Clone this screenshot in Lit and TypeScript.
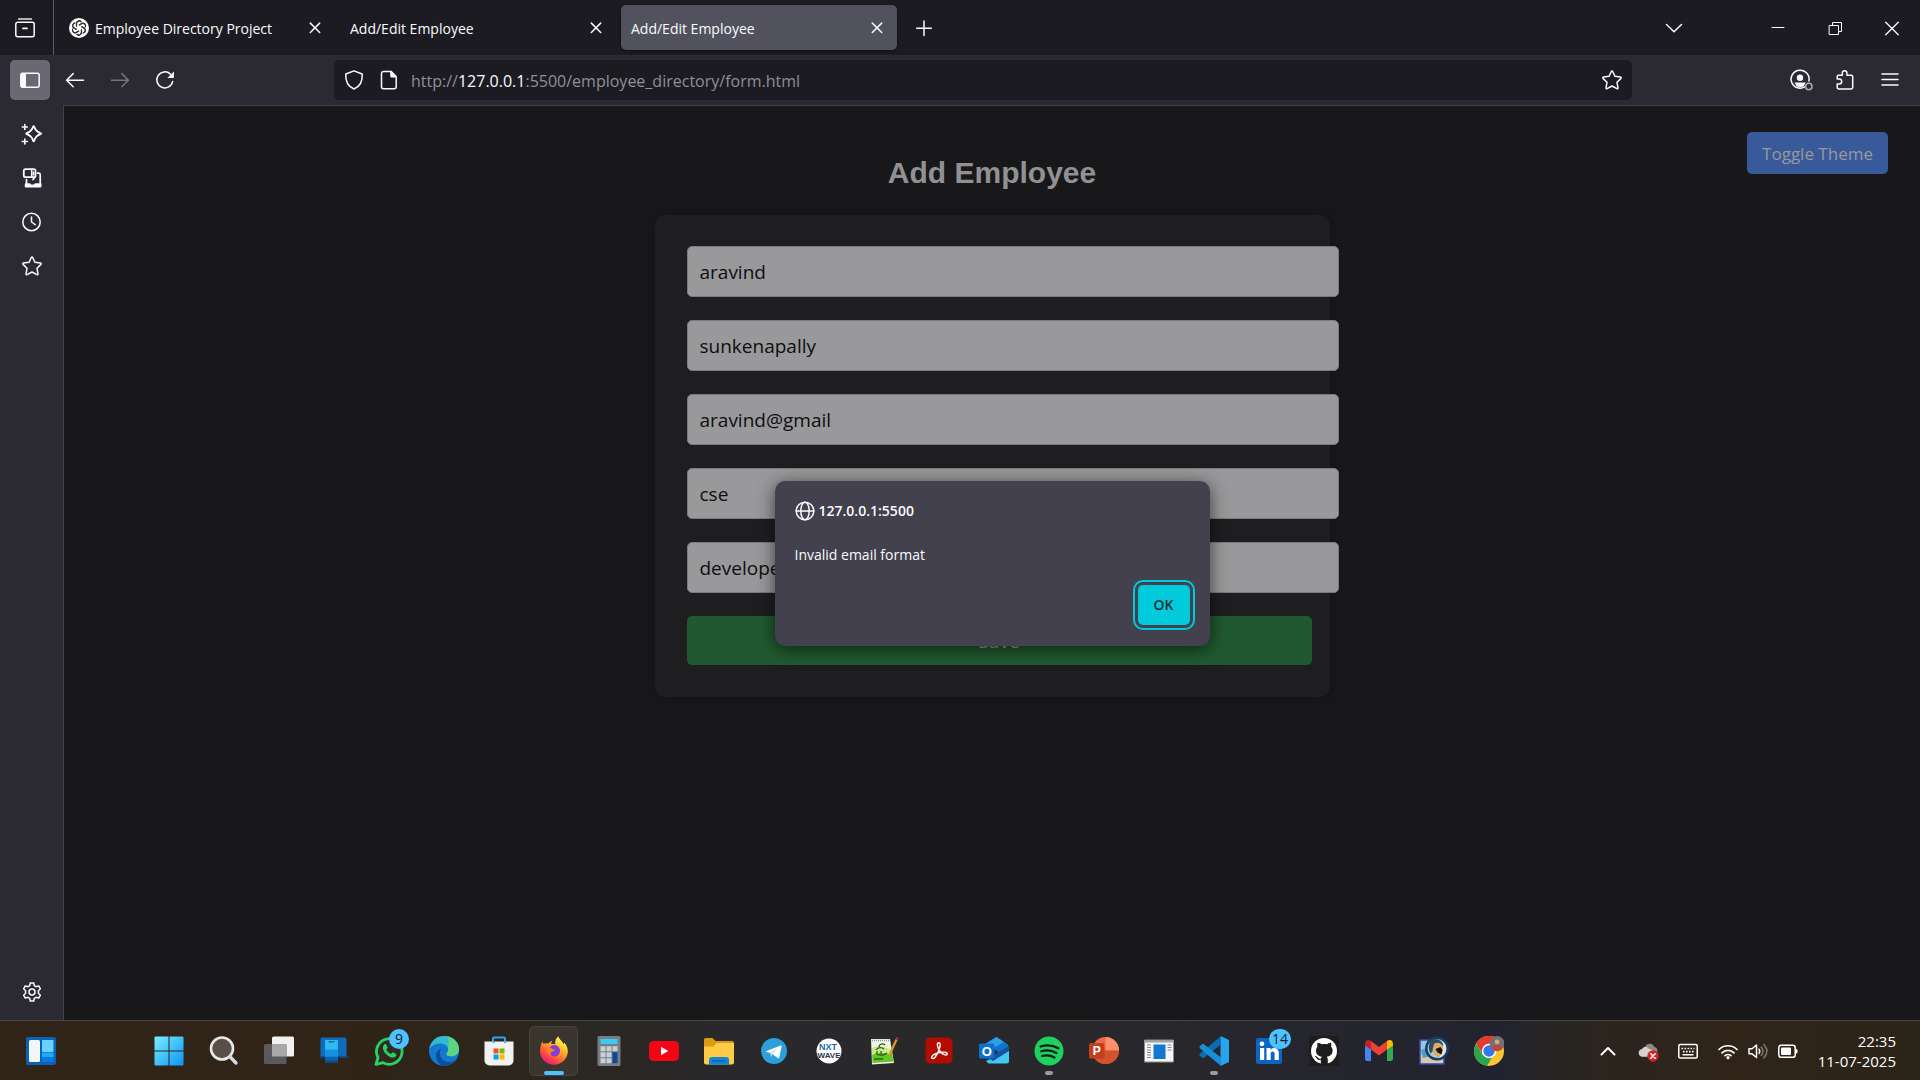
import { LitElement, html, svg, css, type TemplateResult } from "lit";
import { customElement, property } from "lit/decorators.js";

/* ---------- line icons, drawn on a 20 x 20 grid ---------- */
const line: Record<string, TemplateResult> = {
  view: svg`<path d="M3.5 1h13" stroke-width="1.4" opacity=".9"/><path d="M2.8 4.2h14.4a2 2 0 0 1 2 2v10.6a2 2 0 0 1-2 2H2.8a2 2 0 0 1-2-2V6.200a2 2 0 0 1 2-2z"/><path d="M8 10.400h4" stroke-width="1.800"/>`,
  sidebar: svg`<rect x=".8" y="3.300" width="18.400" height="13.900" rx="2"/><path d="M2 3h4v14H2a1 1 0 0 1-1-1V4z" fill="currentColor" stroke-width="0"/>`,
  back: svg`<path d="M18.500 10.200H1.800M8.200 3.600 1.600 10.200l6.600 6.600"/>`,
  forward: svg`<path d="M1.500 10.200h16.700M11.800 3.600l6.600 6.600-6.600 6.600"/>`,
  reload: svg`<path d="M17.700 11.400a8 8 0 1 1-2.300-7.300" /><path d="M19 1.400v5.800a.8.8 0 0 1-.8.800h-5.800z" fill="currentColor" stroke-width="0"/>`,
  shield: svg`<path d="M10 .9 18.200 4c.4 5.800-1.200 12-8.200 15C3 16 1.400 9.800 1.800 4z" stroke-linejoin="round"/>`,
  page: svg`<path d="M4.500 1.400H12l5.200 5.200v10.200a2 2 0 0 1-2 2H4.500a2 2 0 0 1-2-2V3.400a2 2 0 0 1 2-2z"/><path d="M11.200 1l6.500 6.500h-5a1.500 1.500 0 0 1-1.500-1.500z" fill="currentColor" stroke-width="0"/>`,
  star: svg`<path d="M9.300 1.500a.8.8 0 0 1 1.400 0l2.200 4.800 5.600.8c.7.100.9.800.5 1.300l-4 3.900 1 5.600c.1.700-.5 1.100-1.100.8L10 16l-4.900 2.700c-.6.300-1.200-.1-1.100-.8l1-5.600-4-3.900c-.4-.5-.2-1.200.5-1.300l5.600-.8z"/>`,
  chevron: svg`<path d="M2.500 6.500 10 13.800l7.500-7.300"/>`,
  close: svg`<path d="M5.300 5.100l9.400 9.400M14.700 5.100l-9.400 9.400"/>`,
  plus: svg`<path d="M10 3v14.500M2.700 10.200h14.600"/>`,
  account: svg`<path d="M14.700 16.900A9 9 0 1 1 18.900 11"/><circle cx="10" cy="7.800" r="3.200" fill="currentColor" stroke-width="0"/><path d="M4.500 12.500h11l-1 2.500-1 1.300c-2 1.800-6 1.200-7.500-1z" fill="currentColor" stroke-width="0"/><circle cx="18.800" cy="16.500" r="3.200" stroke="#aaaab0" stroke-width="1.500"/>`,
  puzzle: svg`<path d="M2.200 9V6.700a1.500 1.500 0 0 1 1.500-1.500h3.600V3.100a2.300 2.300 0 0 1 4.600 0v2.100h4.300a1.500 1.500 0 0 1 1.500 1.500v10.700a1.500 1.500 0 0 1-1.500 1.500H3.700a1.500 1.500 0 0 1-1.500-1.500V14h2a2.500 2.500 0 0 0 0-5z"/>`,
  menu: svg`<path d="M2 4h16M2 9.500h16M2 15h16"/>`,
  sparkle: svg`<path d="M11.200 2.600c.2-.5.700-.5.900 0 1 3.400 2.600 5.400 6.500 6.600.6.200.6.700 0 .9-3.900 1.200-5.500 3.200-6.500 6.900-.2.500-.7.500-.9 0-1-3.700-2.600-5.700-6.500-6.900-.6-.2-.6-.7 0-.9 3.900-1.200 5.500-3.200 6.500-6.600z" stroke-width="1.800"/><path d="M2.800.5v5M.3 3h5M2.800 15v5M.3 17.500h5" stroke-width="1.600"/>`,
  devices: svg`<rect x="1.800" y="1.200" width="11.700" height="8" rx="1.800" stroke-width="1.800"/><path d="M9.700 1.800v7M11.500 4v3" stroke-width="1.500"/><path d="M15.500 5.200h1.200a1.500 1.500 0 0 1 1.500 1.500v8.500M4.500 11.500v3.700M11 11.500l1.700-2" stroke-width="1.700"/><path d="M3 15.200h5l1 1.200h3l1-1.200h6.500v3a1.200 1.200 0 0 1-1.200 1.200H4a1.200 1.200 0 0 1-1.300-1.200z" fill="currentColor" stroke-width="0"/>`,
  clock: svg`<circle cx="9.500" cy="10" r="8.700"/><path d="M9.500 5v5l3.700 2.600"/>`,
  gear: svg`<path d="M8.300 1h3.400l.6 2.700 1.700 1 2.700-.8 1.700 2.900-2 1.900v2.600l2 1.900-1.700 2.900-2.700-.8-1.700 1-.6 2.700H8.300l-.6-2.700-1.700-1-2.700.8-1.700-2.900 2-1.900V8.700l-2-1.900 1.700-2.900 2.700.8 1.700-1z"/><circle cx="10" cy="10" r="3"/>`,
  minimize: svg`<path d="M4 9.500h12" stroke-width="1"/>`,
  restore: svg`<path d="M3.500 7.500h9v9h-9zM6.500 7.500v-3h9v9h-3" stroke-width="1"/>`,
  exit: svg`<path d="M3.700 4.200l12.600 12.600M16.300 4.200 3.700 16.800" stroke-width="1.300"/>`,
  globe: svg`<circle cx="10" cy="10" r="8.800"/><ellipse cx="10" cy="10" rx="4.200" ry="8.800"/><path d="M1.200 10h17.600"/>`,
  up: svg`<path d="M3.500 13.500 10 7l6.500 6.500" stroke-width="2"/>`,
  keyboard: svg`<rect x=".8" y="3.500" width="18.400" height="13.400" rx="1.500"/><path d="M3.500 7.500h13M5 10.700h11" stroke-dasharray="1.600 1.400" stroke-linecap="butt" stroke-width="1.700"/><path d="M5 13.800h10"/>`,
  wifi: svg`<path d="M1 8.500a12.700 12.700 0 0 1 18 0M4 11.800a8.500 8.500 0 0 1 12 0M7 14.700a4.300 4.300 0 0 1 6 0" stroke-width="1.700"/><circle cx="10" cy="16.700" r="1.600" fill="currentColor" stroke-width="0"/>`,
  volume: svg`<path d="M1 7.800h3L8.500 4v12.500L4 12.800H1z"/><path d="M11 8.200c1 1.300 1 2.800 0 4.200"/><path d="M13.200 6c2.300 2.700 2.300 5.800 0 8.500M15.800 3.500c4 4.300 4 9.200 0 13.500" stroke="#80776d"/>`,
  battery: svg`<rect x=".8" y="4.300" width="16.400" height="12" rx="2.400"/><rect x="3" y="6.500" width="10" height="7.600" rx="1" fill="currentColor" stroke-width="0"/><path d="M17.500 8h.8c1.800.5 1.800 4 0 4.500h-.8z" fill="currentColor" stroke-width="0"/>`,
  cloud: svg`<path d="M7 6c1.500-4.500 8-4.500 9.500 0 2.500.5 3.500 3 2.500 6H6z" fill="#8d8984" stroke-width="0"/><path d="M4.500 15.800C-.5 15.500-.5 8.500 4 8c1.500-3 6-2.500 7 0 3 0 4.500 2 4 5l-2 2.800z" fill="#d5d2cf" stroke-width="0"/><circle cx="15" cy="15" r="5.700" fill="#d3222b" stroke-width="0"/><path d="M12.800 12.800l4.400 4.400M17.200 12.800l-4.400 4.400" stroke-width="1.500"/>`,
};

/* ---------- application icons, drawn on a 30 x 30 grid ---------- */
const apps: Record<string, TemplateResult> = {
  widgets: svg`<rect y="1" width="30" height="28" rx="2" fill="#0a64b4"/><rect x="3" y="4" width="11" height="22" rx="1.500" fill="#f5f5f6"/><rect x="16" y="4" width="11.500" height="12" rx="1" fill="#67d3fd"/><rect x="16" y="16.500" width="11.500" height="4.500" fill="#22a7f5"/><rect x="16" y="21" width="11.500" height="5" rx="1" fill="#087be8"/>`,
  start: svg`<defs><linearGradient id="g" x1="0" y1="0" x2="30" y2="30" gradientUnits="userSpaceOnUse"><stop stop-color="#7df0ff"/><stop offset="1" stop-color="#0893f8"/></linearGradient></defs><path d="M1.500.5H14.500V14.500H.5V1.500a1 1 0 0 1 1-1zM15.500.5H28.500a1 1 0 0 1 1 1V14.500H15.500zM.5 15.500H14.500V29.500H1.500a1 1 0 0 1-1-1zM15.500 15.500H29.500V28.500a1 1 0 0 1-1 1H15.500z" fill="url(#g)"/>`,
  search: svg`<circle cx="13" cy="12.500" r="11" fill="#585048" stroke="#e8e8ea" stroke-width="2.600"/><path d="M20.800 20.500l6.200 6.500" stroke="#d6d9de" stroke-width="3.400" stroke-linecap="round"/>`,
  taskview: svg`<rect x="8" y=".5" width="22" height="20" rx="1.500" fill="#f2f2f2"/><rect x="0" y="8" width="22.500" height="20" rx="1.500" fill="#5b5a5a"/><path d="M8 8h14.500v12.500H8z" fill="#a8a8a8"/>`,
  phone: svg`<path d="M3 1.500h23a1.500 1.500 0 0 1 1.500 1.500v17H1.500V3A1.500 1.500 0 0 1 3 1.500z" fill="#0e6cbd"/><path d="M0 20h30l-1.500 1.700h-27z" fill="#0b4e90"/><rect x="6" y="4" width="13" height="23" rx="1" fill="#2fb9ee"/><path d="M6 13.500h13v7H6z" fill="#168fe0"/><path d="M6 20.500h13V27H6z" fill="#0763b8"/><path d="M6 24.500h13V27H6z" fill="#18477d"/><path d="M9.500 5.800h6" stroke="#0a5078" stroke-width="1"/>`,
  whatsapp: svg`<path d="M2 28.500l2-7A12.800 12.800 0 1 1 9 26.600z" fill="#33291d" stroke="#26d366" stroke-width="2.800" stroke-linejoin="round"/><path d="M10.200 8.500c.8-.7 1.900-.5 2.300.4l1 2.300c.2.600-.1 1.200-1.200 2.300 1 2 2.600 3.500 4.800 4.500 1.100-1.300 1.500-1.700 2.200-1.400l2.500 1.200c1 .5.500 2.300-.6 3.100-1.800 1.300-4.700.8-8.200-2-3.800-3.300-5.400-7.800-2.800-10.400z" fill="#26d366"/>`,
  edge: svg`<circle cx="15" cy="15" r="15" fill="#1379cf"/><path d="M.3 13C1.800 4.500 8 0 15 0c8.500 0 15 6 15 13 0 5-3.500 7.300-7.800 7.300-3 0-4.700-1-4.700-2s1.700-2 1.700-4.500C19.200 9.500 15 7.500 11 7.500 6 7.500 2 10 .3 13z" fill="#35b9cf"/><path d="M18 .3C25.500 1.700 30 7 30 13c0 5-3.500 7.300-7.800 7.300-3 0-4.700-1-4.700-2s1.700-2 1.700-4.500C19 9 21 4 18 .3z" fill="#5cd583"/><path d="M12.500 12.500c-2 2-2.200 6-.5 9 2.500 4.500 8.500 6 15 2.600C24 28 20 30 15 30 10 29 7 24.500 7 19.500c0-3.500 2.500-6.200 5.500-7z" fill="#0b4f98"/>`,
  store: svg`<path d="M9 7V2.500A1 1 0 0 1 10 1.500h10a1 1 0 0 1 1 1V7" fill="none" stroke="#25a9e8" stroke-width="2"/><path d="M.5 5.500h29v19a5 5 0 0 1-5 5h-19a5 5 0 0 1-5-5z" fill="#f1f1f1"/><path d="M9.500 5.500v1.500M21 5.500v1.500" stroke="#25a9e8" stroke-width="2"/><path d="M9.500 12.500h5v5h-5z" fill="#f25022"/><path d="M15.500 12.500h5v5h-5z" fill="#7fba00"/><path d="M9.500 18.500h5v5h-5z" fill="#00a4ef"/><path d="M15.500 18.500h5v5h-5z" fill="#ffb900"/>`,
  firefox: svg`<defs><linearGradient id="g" x1="24" y1="2" x2="7" y2="28" gradientUnits="userSpaceOnUse"><stop offset=".1" stop-color="#fff044"/><stop offset=".45" stop-color="#ff9a25"/><stop offset=".75" stop-color="#ff4545"/><stop offset="1" stop-color="#e31587"/></linearGradient></defs><path d="M3.500 5c0 1.200.3 2 1 2.800C6 7 8 7 9.500 7.500c1-1.500 2.500-2.500 4-2.800-1 1-1.500 2.300-1.300 3.300h4C16 4.500 17 2 19.500.2c.3 3 3.500 4.300 5 7.800.5-.2.700-.8.600-1.500C28 9.500 29 13 28.800 16 28.200 23.500 22 28.800 15 28.800S1 23 1 15.500C1 11.500 2 8 3.500 5z" fill="url(#g)"/><circle cx="15.300" cy="14.800" r="5.700" fill="#803ed6"/><path d="M8.500 12c2-.8 4.200-.3 5 1.300.8.300 2 .1 2.700-.4-.5 2-2.200 2.700-4 3.300-1.500.5-1 2.700.8 3.200-3.500.6-6-3-4.500-7.400z" fill="#ff7c2c"/>`,
  calc: svg`<rect x="3.500" width="23" height="30" rx="1.500" fill="#777d84"/><path d="M6.500 3h17v5h-17z" fill="#3ccbf4"/><path d="M6.500 10.200h5v5h-5zM12.500 10.200h5v5h-5zM18.500 10.200h5v5h-5zM6.500 16.200h5v5h-5zM12.500 16.200h5v5h-5zM6.500 22.200h5v5h-5zM12.500 22.200h5v5h-5z" fill="#c9d0d7"/><path d="M18.500 16.200h5v11h-5z" fill="#0d4a94"/>`,
  youtube: svg`<rect y="5" width="30" height="20" rx="4.500" fill="#f50514"/><path d="M12 10.800v8.400l7.300-4.200z" fill="#fff"/>`,
  folder: svg`<path d="M0 3.500a1.500 1.500 0 0 1 1.500-1.500h7l3 3H28a2 2 0 0 1 2 2v7H0z" fill="#dc9b10"/><path d="M0 10.500h9.500l3-3.500H30v19.500a2 2 0 0 1-2 2H2a2 2 0 0 1-2-2z" fill="#fdcb45"/><path d="M5 28.500v-4.500a3 3 0 0 1 3-3h14a3 3 0 0 1 3 3v4.500z" fill="#1087d8"/><path d="M8.500 24.800h13" stroke="#08579c" stroke-width="1.200"/>`,
  telegram: svg`<circle cx="15" cy="15" r="13" fill="#2ba0dc"/><path d="M6.500 15.500 21.500 9.500c.8-.3 1.300.1 1.100 1L20.300 21.500c-.2.900-.8 1.100-1.500.6l-6.500-4.600z" fill="#fff"/><path d="M11 16.800l8.500-5.300-6.500 6.500-.5 3.600z" fill="#c8dcea"/>`,
  nxtwave: svg`<circle cx="15" cy="15" r="12.500" fill="#fff"/><text x="14" y="14" text-anchor="middle" font-family="Liberation Sans, sans-serif" font-weight="700" font-size="9" fill="#2569a6">NXT</text><text x="15" y="21.500" text-anchor="middle" font-family="Liberation Sans, sans-serif" font-weight="700" font-size="8" fill="#1e3650">WAVE</text>`,
  notepad: svg`<path d="M2 3h19l4 24-22 1.500z" fill="#f1f4e4"/><path d="M3 17c6-4 13-3 20 0l1.500 8.500-21 1.500z" fill="#63c526"/><path d="M3 12c6-3 11-2 18 1l1 6c-7-3-13-3-19 0z" fill="#c9e88a"/><path d="M3 4.500h17" stroke="#89949a" stroke-width="1.600" stroke-dasharray="1 1"/><path d="M7 14c2-3 6-3 8-1m-5-2c0-3 4-4 6-2m-9 8c2 3 8 3 11 0m-10 1v-3m4 3v-3m-7 8h9" fill="none" stroke="#2f5f20" stroke-width="1.300"/><path d="M27.500 3.500 20.500 19" stroke="#d89a28" stroke-width="2.300"/><path d="M28.500 1.500l-1 2.500" stroke="#a03838" stroke-width="2.300"/>`,
  acrobat: svg`<rect x="1.500" y="1.500" width="27" height="26" rx="4.500" fill="#b30b00"/><path d="M13.500 7.500c2-2 3.200 0 2.400 3.500-.8 3.500-2.800 7.700-5 10.500-1.500 1.700-4 1-3.200-.8 1-2.200 6-4 10.500-4.500 3-.3 5.600.5 5 2-.8 1.700-4.200.3-6.300-2-2.200-2.300-4.200-6.500-3.400-8.700z" fill="none" stroke="#fff" stroke-width="1.400"/>`,
  outlook: svg`<path d="M6 8 17.500 1 29 8.500v14L18 15z" fill="#1273cf"/><path d="M6 8 17.500 1 25 6 11 14z" fill="#2b9fe8"/><path d="M30 10.500V25a2.500 2.500 0 0 1-2.500 2.500h-18L7 25l11-5z" fill="#42c8f3"/><path d="M30 10v5L14 25l-5-3z" fill="#15539d"/><rect y="7.500" width="15.500" height="15" rx="1.500" fill="#0c70d0"/><text x="7.700" y="19.500" text-anchor="middle" font-family="Liberation Sans, sans-serif" font-weight="700" font-size="13" fill="#fff">O</text>`,
  spotify: svg`<circle cx="15" cy="15" r="14.500" fill="#1ed15f"/><path d="M6.500 10.500c6-1.800 12.500-1.200 18 1.800M7.200 15.300c5-1.400 10.700-.9 15.300 1.700M8 20c4.200-1 8.700-.6 12.500 1.500" fill="none" stroke="#161c18" stroke-width="2.200" stroke-linecap="round"/>`,
  powerpoint: svg`<circle cx="16.500" cy="14.500" r="13.500" fill="#ed6c47"/><path d="M16.500 1A13.500 13.500 0 0 1 30 14.500H16.500z" fill="#ff8f6b"/><path d="M3 14.500h27A13.500 13.500 0 0 1 3 14.500z" fill="#d35230"/><rect y="7" width="15.500" height="15.500" rx="1.500" fill="#c43e1c"/><text x="7.700" y="19" text-anchor="middle" font-family="Liberation Sans, sans-serif" font-weight="700" font-size="12" fill="#fff">P</text>`,
  window: svg`<path d="M.5 4h29v22H.5z" fill="#f6f6f6" stroke="#8d8d8d"/><path d="M.5 4h29v2.500H.5z" fill="#a0a0a0"/><path d="M9.500 8.500h12v14.500h-12z" fill="#1578cf"/><path d="M3 9h4M3 11.500h4M3 14h4M3 16.500h4M3 19h4M3 21.500h4M23.500 9h4M23.500 11.500h4M23.500 14h4" stroke="#8a8a8a"/>`,
  vscode: svg`<path d="M21.500 0 30 4v22l-8.500 4z" fill="#27a4f0"/><path d="M22 0v8.500L4 22.500l-3.500-3V18z" fill="#0a6cb4"/><path d="M22 30v-8.500L4 7.500l-3.500 3V12z" fill="#168fd8"/>`,
  linkedin: svg`<rect x="2" y="2" width="26" height="26" rx="2" fill="#0a66c2"/><circle cx="8" cy="7.800" r="2.400" fill="#fff"/><path d="M6 12h4.200v12H6zM12.500 12h4v1.700c2-3 8.300-2.500 8.300 3V24h-4.200v-6.300c0-3-3.900-2.700-3.900 0V24h-4.200z" fill="#fff"/>`,
  github: svg`<path d="M0 0h30v30H0z" fill="#1f1c1d"/><circle cx="15" cy="15" r="13" fill="#fff"/><path d="M11.800 28v-4.200c-3 .6-4-1-4.500-2-.4-.8-1-1.300-1.600-1.700 2-.5 2.800 1 3.300 1.700.8 1 2 1 3 .6.200-.8.500-1.300 1-1.700-4.500-.5-6-3-6-6.200 0-1.500.5-2.800 1.500-3.800-.5-1.500-.3-3 .2-4 1.500 0 3 .8 4 1.600 1.600-.4 3.600-.4 5.200 0 1-.8 2.500-1.600 4-1.600.5 1 .6 2.500.2 4 1 1 1.500 2.300 1.500 3.800 0 3.200-1.500 5.700-6 6.200.8.700 1.200 1.600 1.200 3V28z" fill="#1f1c1d"/>`,
  gmail: svg`<path d="M1 8v15a2 2 0 0 0 2 2h4V12z" fill="#4285f4"/><path d="M23 12v13h4a2 2 0 0 0 2-2V8z" fill="#34a853"/><path d="M1 8c0-4 3.500-4.800 6-3v8.500L1 9.500z" fill="#c5221f"/><path d="M7 5l8 6 8-6v8.500l-8 6-8-6z" fill="#ea4335"/><path d="M29 8c0-4-3.500-4.800-6-3v8.500l6-4z" fill="#fbbc04"/>`,
  viewer: svg`<path d="M1 4h24v24H1z" fill="#96c7dd" stroke="#4044b0" stroke-width="1.500"/><path d="M2 19h22v8H2z" fill="#dac8a2"/><path d="M2 14l8-3 6 8-12 3z" fill="#4f9cc4"/><circle cx="18" cy="12.500" r="10.700" fill="#a9c9d8" stroke="#153e68" stroke-width="2.500"/><path d="M12 4.500c5-3.500 11 0 12.500 5l-8 3-5 5C9 13 9.500 7.500 12 4.500z" fill="#2b4d66"/><path d="M15 8c3-2.500 8-1 9.500 3.500 1 4-1 8-5 9.500-3-1-5.500-4-6-7z" fill="#dfaa68"/><path d="M24 6c3 2.500 4 7 2.500 10.500S21 22 19 22.500c4-3.500 6-7.500 5-16.500z" fill="#f0e6d8"/><path d="M16.500 13l5-2 2 3-1 4.500-4-2z" fill="#181416"/>`,
  chrome: svg`<circle cx="15" cy="15" r="15" fill="#fdc62f"/><path d="M2 7.500A15 15 0 0 1 28 7.500H15L9 18.500z" fill="#e33b2e"/><path d="M2 7.500 8.500 18.500 15 22l3-.5-5 8.400A15 15 0 0 1 2 7.500z" fill="#2da44e"/><circle cx="15" cy="15" r="7.200" fill="#fff"/><circle cx="15" cy="15" r="5.700" fill="#3478e8"/><circle cx="23" cy="7.500" r="7.500" fill="#77706f"/><path d="M18 13c1-4 3-4 5-4s4 1 5 4c-3 3-7 3-10 0z" fill="#c0463e"/><circle cx="23" cy="6" r="2.400" fill="#d8a184"/>`,
  chatgpt: svg`<circle cx="15" cy="15" r="15" fill="#fff"/><g fill="none" stroke="#333" stroke-width="1.700">${[0, 60, 120, 180, 240, 300].map(
    (a) => svg`<path transform="rotate(${a} 15 15)" d="M11.500 13V8.500a4 4 0 0 1 7.500-2M15 10.500l4-2.300a4 4 0 0 1 5.600 4.600"/>`,
  )}</g>`,
};

@customElement("line-icon")
export class LineIcon extends LitElement {
  @property() name = "";
  static styles = css`
    :host { display: block; flex: none; width: 20px; height: 20px; }
    .glyph { display: block; width: 100%; height: 100%; overflow: visible; }
  `;
  render() {
    return html`<svg class="glyph" viewBox="0 0 20 20" fill="none" stroke="currentColor" stroke-width="1.5"
      stroke-linecap="round" stroke-linejoin="round" aria-hidden="true">${line[this.name]}</svg>`;
  }
}

@customElement("app-icon")
export class AppIcon extends LitElement {
  @property() name = "";
  static styles = css`
    :host { display: block; flex: none; width: 30px; height: 30px; }
    .glyph { display: block; width: 100%; height: 100%; }
  `;
  render() {
    return html`<svg class="glyph" viewBox="0 0 30 30" aria-hidden="true">${apps[this.name]}</svg>`;
  }
}

const reset = css`
  :host, * { box-sizing: border-box; }
  button { border: 0; padding: 0; margin: 0; background: none; color: inherit; font: inherit; }
  .icon { display: flex; align-items: center; justify-content: center; flex: none; width: 40px; height: 40px; border-radius: 5px; }
`;

interface Tab { title: string; icon?: string; active?: boolean }

@customElement("browser-chrome")
export class BrowserChrome extends LitElement {
  private tabs: Tab[] = [
    { title: "Employee Directory Project", icon: "chatgpt" },
    { title: "Add/Edit Employee" },
    { title: "Add/Edit Employee", active: true },
  ];

  static styles = [reset, css`
    :host { display: block; color: #fbfbfe; background: #2b2a33; }
    .strip { display: flex; align-items: center; height: 55px; background: #1c1b22; }
    .view { width: 53px; height: 55px; padding-right: 3px; border-radius: 0; }
    .tabs { display: flex; gap: 5px; height: 55px; padding: 5px; border-left: 1px solid #5b5a62; }
    .tab { display: flex; align-items: center; gap: 6px; width: 276px; padding: 0 10px; border-radius: 5px; font-size: 14px; }
    .active { background: #52525e; box-shadow: 0 1px 3px #0008; }
    .title { flex: 1; white-space: nowrap; text-align: left; line-height: 20px; padding-top: 2px; }
    .favicon { width: 20px; height: 20px; }
    .shut { width: 20px; height: 20px; }
    .spacer { flex: 1; }
    .all { margin-right: 54px; }
    .win { width: 56px; }
    .low { width: 60px; }
    .plus { margin-left: 2px; }
    .bar { display: flex; align-items: center; gap: 5px; height: 50px; padding: 0 10px; }
    .on { background: #6a6973; }
    .off { color: #76757d; }
    .url { display: flex; align-items: center; flex: 1; height: 40px; margin: 0 143px 0 144px; padding: 0 10px; gap: 15px; border-radius: 5px; background: #1c1b22; }
    .mini { width: 20px; height: 20px; }
    .path { flex: 1; font-size: 16px; line-height: 22px; color: #8f8f94; text-decoration: none; padding-top: 2px; margin-left: -3px; }
    .host { color: #fbfbfe; }
  `];

  private btn(name: string, label: string, cls = "") {
    return html`<button class="icon ${cls}" aria-label=${label}><line-icon name=${name}></line-icon></button>`;
  }

  render() {
    return html`
      <div class="strip">
        ${this.btn("view", "Recent browsing", "view")}
        <div class="tabs" role="tablist">
          ${this.tabs.map((t) => html`
            <div class="tab ${t.active ? "active" : ""}">
              ${t.icon ? html`<app-icon class="favicon" name=${t.icon}></app-icon>` : ""}
              <button class="title" role="tab" aria-selected=${t.active ? "true" : "false"}>${t.title}</button>
              ${this.btn("close", "Close tab", "shut")}
            </div>`)}
        </div>
        ${this.btn("plus", "New tab", "plus")}
        <div class="spacer"></div>
        ${this.btn("chevron", "List all tabs", "all")}
        ${this.btn("minimize", "Minimize", "low")}
        ${this.btn("restore", "Restore", "win")}
        ${this.btn("exit", "Close window", "win")}
      </div>
      <div class="bar">
        ${this.btn("sidebar", "Sidebar", "on")}
        ${this.btn("back", "Back")}
        ${this.btn("forward", "Forward", "off")}
        ${this.btn("reload", "Reload")}
        <div class="url">
          ${this.btn("shield", "Protection", "mini")}
          ${this.btn("page", "Site information", "mini")}
          <a class="path" href="http://127.0.0.1:5500/employee_directory/form.html">http://<span class="host">127.0.0.1</span>:5500/employee_directory/form.html</a>
          ${this.btn("star", "Bookmark", "mini")}
        </div>
        ${this.btn("account", "Account")}
        ${this.btn("puzzle", "Extensions")}
        ${this.btn("menu", "Menu")}
      </div>`;
  }
}

@customElement("side-rail")
export class SideRail extends LitElement {
  static styles = [reset, css`
    :host { display: flex; flex-direction: column; flex: none; align-items: center; gap: 4px; width: 64px; padding: 9px 0 8px;
      color: #fbfbfe; background: #2b2a33; border-right: 1px solid #42414d; }
    .last { margin-top: auto; }
  `];
  render() {
    return html`
      ${[["sparkle", "Chatbot"], ["devices", "Tabs from other devices"], ["clock", "History"], ["star", "Bookmarks"]].map(
        ([n, l]) => html`<button class="icon" aria-label=${l}><line-icon name=${n}></line-icon></button>`)}
      <button class="icon last" aria-label="Customize sidebar"><line-icon name="gear"></line-icon></button>`;
  }
}

@customElement("employee-page")
export class EmployeePage extends LitElement {
  private fields = [
    ["First name", "aravind"],
    ["Last name", "sunkenapally"],
    ["Email", "aravind@gmail"],
    ["Department", "cse"],
    ["Role", "developer"],
  ];

  static styles = [reset, css`
    :host { display: block; flex: 1; position: relative; background: #18181a; border-top: 1px solid #42414d; }
    .page { display: flex; flex-direction: column; align-items: center; padding: 49px 32px; gap: 24px; }
    .heading { margin: 0; font: 700 30px/36px "Liberation Sans", Arial, sans-serif; color: #919193; }
    .theme { position: absolute; top: 26px; right: 32px; height: 42px; padding: 0 15px; border-radius: 5px; background: #385a9b; color: #99999b; font-size: 17px; }
    .card { display: flex; flex-direction: column; gap: 23px; width: 100%; max-width: 675px; padding: 31px 18px 32px 32px; border-radius: 10px; background: #1e1e20; box-shadow: 0 0 12px #0003; }
    .field { flex: none; width: calc(100% + 27px); height: 51px; margin: 0; padding: 0 12px; border: 1px solid #7b7b7d; border-radius: 5px; background: #99999b; color: #0e0e10; font-family: inherit; font-size: 19px; outline: 0; }
    .save { height: 49px; border-radius: 5px; background: #20592f; color: #99999b; font-size: 19px; }
    .layer { position: absolute; inset: 0; display: flex; align-items: center; justify-content: center; }
    .dialog { display: flex; flex-direction: column; width: 435px; height: 165px; padding: 20px; border-radius: 10px; background: #42414d; color: #fbfbfe; box-shadow: 0 3px 18px #0009; font-size: 14px; line-height: 20px; }
    .origin { display: flex; align-items: center; gap: 4px; margin: 0; font-size: 14px; line-height: 20px; font-weight: 600; }
    .message { margin: 24px 0 0; }
    .ok { align-self: flex-end; flex: none; width: 52px; height: 40px; margin: 20px 0 0; border-radius: 5px; background: #00cadb; color: #2b2a33; font-weight: 600; outline: 2px solid #00cadb; outline-offset: 3px; }
  `];

  render() {
    return html`
      <div class="page">
        <h1 class="heading">Add Employee</h1>
        <form class="card" @submit=${(e: Event) => e.preventDefault()}>
          ${this.fields.map(([l, v]) => html`<input class="field" type="text" aria-label=${l} .value=${v} />`)}
          <button class="save">Save</button>
        </form>
      </div>
      <button class="theme">Toggle Theme</button>
      <div class="layer">
        <section class="dialog" role="alertdialog" aria-labelledby="origin" aria-describedby="message">
          <h2 class="origin" id="origin"><line-icon name="globe"></line-icon>127.0.0.1:5500</h2>
          <p class="message" id="message">Invalid email format</p>
          <button class="ok">OK</button>
        </section>
      </div>`;
  }
}

interface Task { name: string; badge?: string; mark?: "current" | "open" }

@customElement("task-bar")
export class TaskBar extends LitElement {
  private tasks: Task[] = [
    { name: "start" }, { name: "search" }, { name: "taskview" }, { name: "phone" },
    { name: "whatsapp", badge: "9" }, { name: "edge" }, { name: "store" },
    { name: "firefox", mark: "current" }, { name: "calc" }, { name: "youtube" },
    { name: "folder" }, { name: "telegram" }, { name: "nxtwave" }, { name: "notepad" },
    { name: "acrobat" }, { name: "outlook" }, { name: "spotify", mark: "open" },
    { name: "powerpoint" }, { name: "window" }, { name: "vscode", mark: "open" },
    { name: "linkedin", badge: "14" }, { name: "github" }, { name: "gmail" },
    { name: "viewer" }, { name: "chrome" },
  ];

  static styles = [reset, css`
    :host { display: flex; align-items: center; flex: none; height: 60px; padding: 0 24px 0 26px; border-top: 1px solid #4b463f; color: #fff;
      background: linear-gradient(90deg, #302418 0%, #302317 18%, #2c261c 27%, #29282a 37%, #28272b 60%, #222330 78%, #29251f 82%, #302419 90%, #2b2419 100%); }
    .apps { display: flex; margin-left: 85px; }
    .task { position: relative; display: flex; align-items: center; justify-content: center; width: 55px; height: 50px; }
    .current::before { content: ""; position: absolute; inset: 0 3px; border: 1px solid #48433a; border-radius: 5px; background: #ffffff12; }
    .pic { position: relative; }
    .current::after, .open::after { content: ""; position: absolute; bottom: 1px; width: 20px; height: 4px; border-radius: 2px; background: #4cc2ff; }
    .open::after { width: 8px; background: #9b9b9d; }
    .badge { position: absolute; top: 3px; left: 28px; min-width: 20px; height: 20px; padding: 0 3px; border-radius: 10px; background: #4cc2ff; color: #14202a; font-size: 14px; line-height: 20px; text-align: center; }
    .tray { display: flex; align-items: center; margin-left: auto; }
    .gap { margin-right: 20px; }
    .near { margin-right: 10px; }
    .clock { margin-left: 20px; text-align: right; font-size: 15px; line-height: 20px; }
  `];

  render() {
    return html`
      <button aria-label="widgets"><app-icon name="widgets"></app-icon></button>
      <nav class="apps">
        ${this.tasks.map((t) => html`
          <button class="task ${t.mark ?? ""}" aria-label=${t.name}>
            <app-icon class="pic" name=${t.name}></app-icon>
            ${t.badge ? html`<span class="badge">${t.badge}</span>` : ""}
          </button>`)}
      </nav>
      <div class="tray">
        <line-icon class="gap" name="up"></line-icon>
        <line-icon class="gap" name="cloud"></line-icon>
        <line-icon class="gap" name="keyboard"></line-icon>
        <line-icon class="near" name="wifi"></line-icon>
        <line-icon class="near" name="volume"></line-icon>
        <line-icon name="battery"></line-icon>
        <time class="clock" datetime="2025-07-11T22:35">22:35<br />11-07-2025</time>
      </div>`;
  }
}

@customElement("app-root")
export class AppRoot extends LitElement {
  static styles = css`
    :host { display: flex; flex-direction: column; min-height: 100vh; background: #18181a; font-family: "Open Sans", "Noto Sans", sans-serif; }
    .body { display: flex; flex: 1; }
  `;
  render() {
    return html`
      <browser-chrome></browser-chrome>
      <div class="body">
        <side-rail></side-rail>
        <employee-page></employee-page>
      </div>
      <task-bar></task-bar>`;
  }
}
